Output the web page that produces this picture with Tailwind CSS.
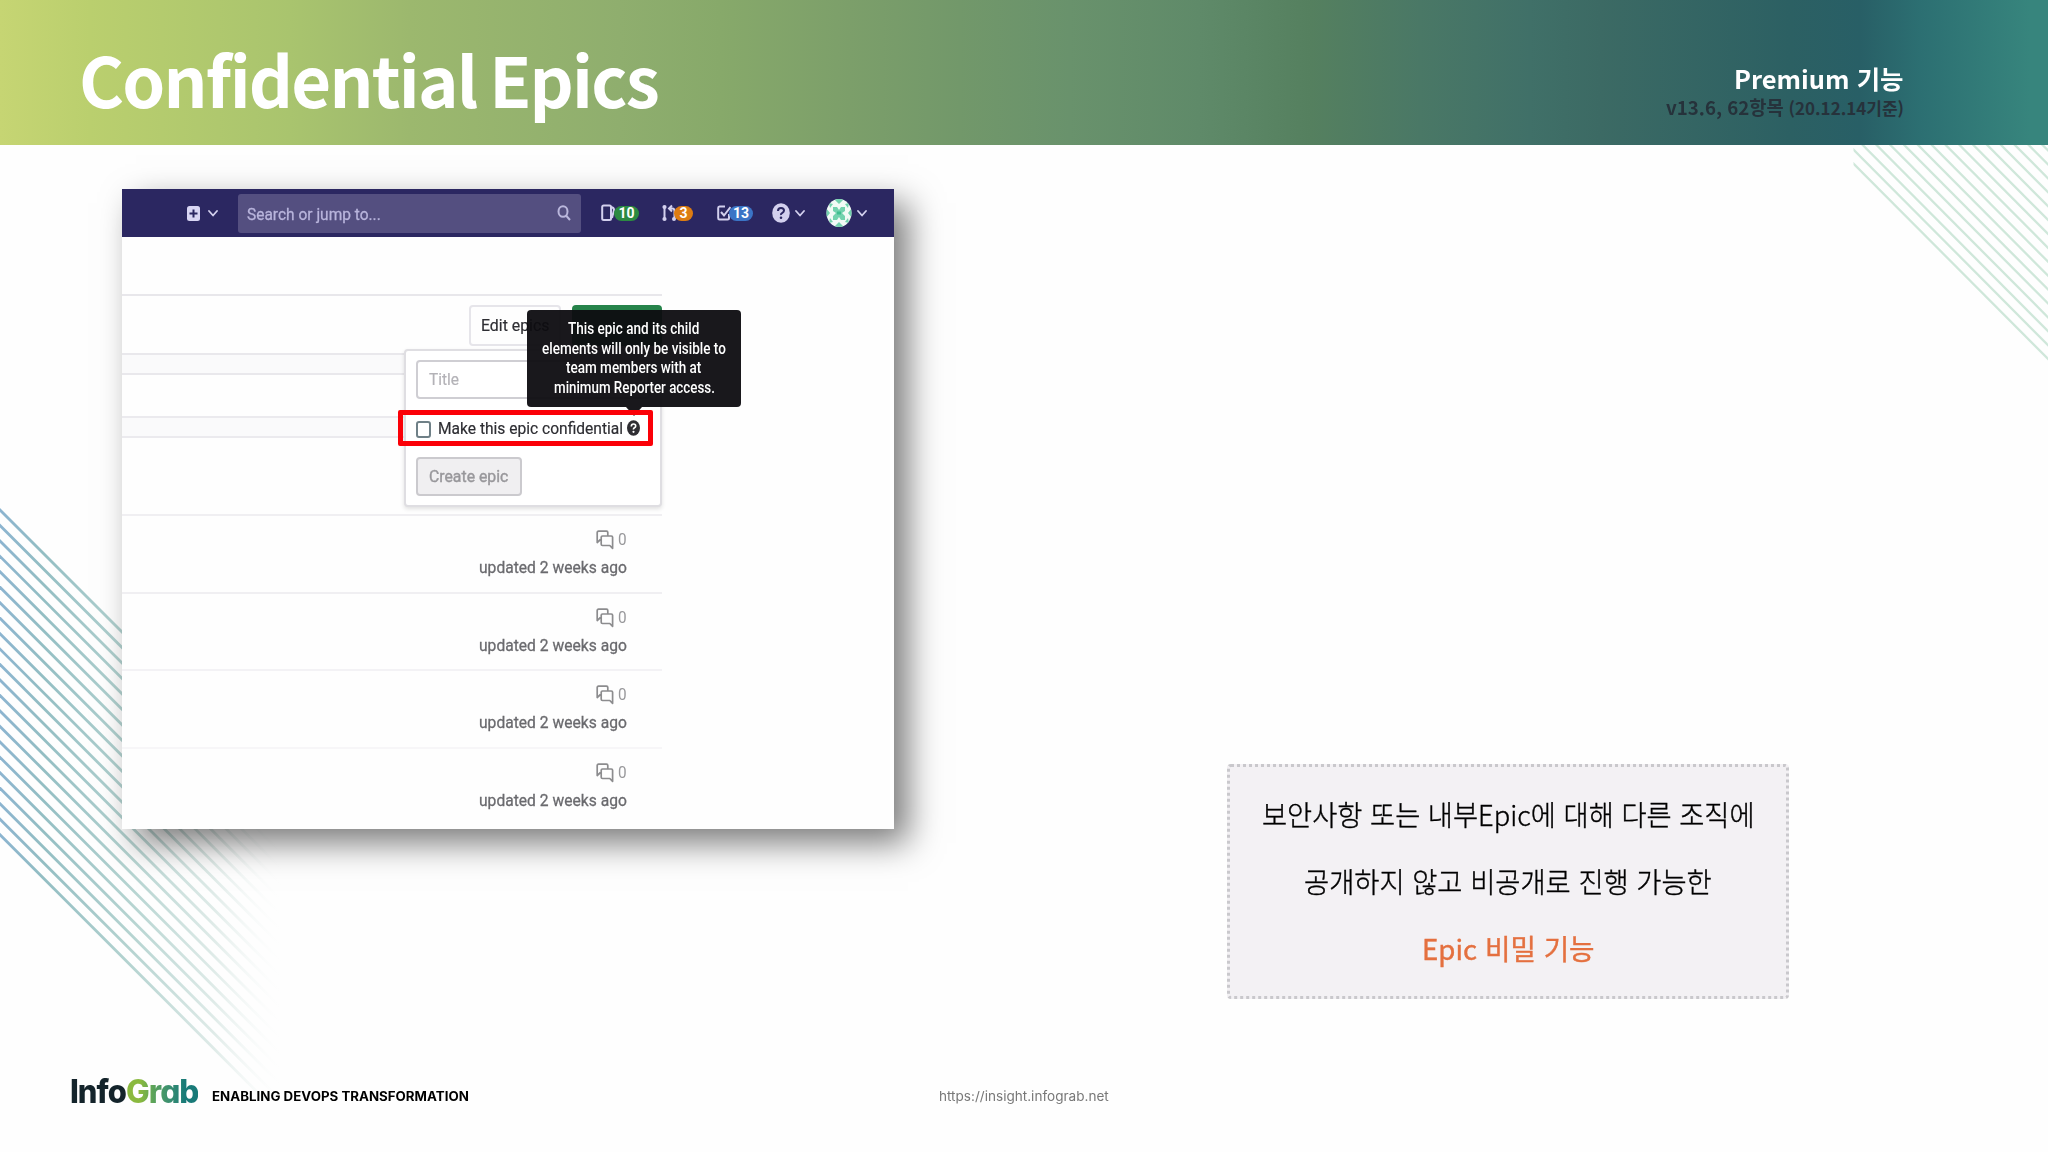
<!DOCTYPE html>
<html lang="ko">
<head>
<meta charset="utf-8">
<title>Confidential Epics</title>
<script src="https://cdn.jsdelivr.net/npm/@tailwindcss/browser@4"></script>
</head>
<body class="bg-[#fefefe]">
<svg class="hidden">
  <symbol id="chev" viewBox="0 0 10 7"><path d="M1 1l4 4.500 4-4.500" fill="none" stroke="#d3d0ee" stroke-width="1.800" stroke-linecap="round" stroke-linejoin="round"/></symbol>
  <symbol id="comments" viewBox="0 0 18 20"><path d="M4.500 9.500 1.200 12.500V2.500Q1.200 1.200 2.500 1.200H10.500Q11.800 1.200 11.800 2.500V5.500M6.500 6H15.300Q16.600 6 16.600 7.300V18.300L13.800 15.500H6.500Q5.200 15.500 5.200 14.200V7.300Q5.200 6 6.500 6Z" fill="none" stroke="#8c8c8e" stroke-width="1.700" stroke-linejoin="round"/></symbol>
</svg>
<div class="relative flex h-[1152px] w-[2048px] flex-col overflow-hidden font-['Roboto',sans-serif]">
  <!-- decorative stripes -->
  <svg class="absolute left-0 top-0" width="2048" height="1152" fill="none">
    <defs>
      <linearGradient id="lg" gradientUnits="userSpaceOnUse" x1="0" y1="0" x2="285" y2="0">
        <stop offset="0" stop-color="#8cb4d0"/><stop offset=".15" stop-color="#93bec3"/><stop offset=".45" stop-color="#b4d3d0"/><stop offset=".75" stop-color="#dfebe8"/><stop offset="1" stop-color="#fefefe" stop-opacity="0"/>
      </linearGradient>
      <clipPath id="rc"><rect x="1853.500" y="145" width="195" height="300"/></clipPath>
      <clipPath id="lc"><rect x="0" y="480" width="285" height="620"/></clipPath>
    </defs>
    <g id="left" clip-path="url(#lc)" stroke="url(#lg)" stroke-width="2.800"></g>
    <g id="right" clip-path="url(#rc)" stroke="#cfe7da" stroke-width="2.300"></g>
  </svg>

  <header class="relative flex h-[145px] shrink-0 items-start justify-between bg-[linear-gradient(90deg,#c6d573_0px,#bacf6e_90px,#a9c46e_290px,#9cb86e_410px,#8fae6e_620px,#87a96a_720px,#7c9f6a_850px,#72986a_960px,#69926c_1070px,#5f8a69_1200px,#55805f_1310px,#4a7866_1420px,#407068_1530px,#3c6a64_1600px,#2c6063_1790px,#285f66_1860px,#2c6f72_1920px,#37857d_2030px)] pl-[79px] pr-[144px]">
    <h1 class="pt-[28px] font-['Noto_Sans_CJK_KR',sans-serif] text-[69px] font-bold leading-[100px] tracking-[-1.8px] text-white [word-spacing:-5px]"><span data-w="579">Confidential Epics</span></h1>
    <div class="flex flex-col items-end pt-[60px] font-['Noto_Sans_CJK_KR',sans-serif] font-bold">
      <div class="text-[25px] leading-[36px] text-white"><span data-w="170">Premium 기능</span></div>
      <div class="flex items-baseline gap-[5px] leading-[22px] text-[#26323b]"><span class="text-[19px]" data-w="118">v13.6, 62항목</span><span class="text-[17px]" data-w="115">(20.12.14기준)</span></div>
    </div>
  </header>

  <main class="relative flex flex-1 items-start pl-[122px] pt-[44px]">
    <section class="relative h-[640px] w-[772px] bg-[#fefefe] shadow-[14px_14px_32px_0px_rgba(0,0,0,0.52)]">
      <nav class="flex h-[48px] items-center bg-[#2b2761]">
        <svg class="ml-[65px]" width="13" height="15"><rect width="13" height="15" rx="2.500" fill="#d9d6f4"/><path d="M6.500 3.500v8M2.500 7.500h8" stroke="#2b2761" stroke-width="2"/></svg>
        <svg class="ml-[8px]" width="10" height="7"><use href="#chev"/></svg>
        <div class="ml-[20px] flex h-[39px] w-[343px] items-center justify-between rounded-[3px] bg-[#544f80] pl-[9px] pr-[10px] text-[17px] text-[#b9b5dc] [-webkit-text-stroke:0.3px]">
          <span class="pt-[3px]" data-w="134">Search or jump to...</span>
          <svg width="14" height="16" fill="none" stroke="#bab7dc" stroke-width="2"><ellipse cx="6" cy="6.500" rx="4.500" ry="5.300"/><path d="M9 10.500l4 4.500"/></svg>
        </div>
        <div class="ml-[20px] flex items-center text-[14px] font-bold leading-[15px] text-white">
          <svg width="14" height="18" fill="none" stroke="#d3d0ee" stroke-width="2"><rect x="1.200" y="1.500" width="8.800" height="14.500" rx="1.500"/><path d="M10 3q3 .5 3 3l-2 8"/></svg>
          <span class="-ml-px flex h-[15px] w-[25px] items-center justify-center rounded-full bg-[#2c8a42]">10</span>
          <svg class="ml-[23px]" width="14" height="18" fill="none" stroke="#d3d0ee" stroke-width="2"><path d="M2.500 3v12M7.500 4.500h3q2 0 2 2.500v8M10 1.500l-3 3 3 3"/><g fill="#d3d0ee" stroke="none"><circle cx="2.500" cy="3" r="2.100"/><circle cx="2.500" cy="15" r="2.100"/><circle cx="12" cy="15" r="2"/></g></svg>
          <span class="-ml-[2px] flex h-[15px] w-[19px] items-center justify-center rounded-full bg-[#dd7c12]">3</span>
          <svg class="ml-[24px]" width="14" height="18" fill="none" stroke="#d3d0ee" stroke-width="2"><path d="M8 2.500H2.500Q1.200 2.500 1.200 4v10Q1.200 15.500 2.500 15.500h8Q12 15.500 12 14v-4M4 8l3 3.500L13.500 3"/></svg>
          <span class="-ml-[2px] flex h-[15px] w-[24px] items-center justify-center rounded-full bg-[#3b74c6]">13</span>
        </div>
        <svg class="ml-[19px]" width="18" height="20"><ellipse cx="9" cy="10" rx="8.800" ry="9.800" fill="#d3d0ee"/><path d="M6 8q0-3 3-3t3 2.500q0 1.500-1.600 2.300T9 12" fill="none" stroke="#2b2761" stroke-width="2"/><circle cx="9" cy="14.700" r="1.300" fill="#2b2761"/></svg>
        <svg class="ml-[5px]" width="10" height="7"><use href="#chev"/></svg>
        <svg class="ml-[21px]" width="26" height="28" viewBox="0 0 26 28"><defs><clipPath id="av"><ellipse cx="13" cy="14" rx="12.500" ry="14"/></clipPath></defs><g clip-path="url(#av)"><rect width="26" height="28" fill="#f2faf6"/><g fill="#73d2ae"><path d="M7 8h4l2 3 2-3h4v4l-3 2 3 3v4h-4l-2-3-2 3H7v-4l3-3-3-2z"/><path d="M8 0l5 5 5-5zM8 28l5-5 5 5zM0 9l4 5-4 5zM26 9l-4 5 4 5zM3 4l4 1-3 4zM23 4l-4 1 3 4zM3 24l4-1-3-4zM23 24l-4-1 3-4z"/></g><path d="M11 12.500h4v3h-4z" fill="#3fbd8f"/></g></svg>
        <svg class="ml-[5px]" width="10" height="7"><use href="#chev"/></svg>
      </nav>
      <div class="flex w-[540px] flex-col">
        <div class="h-[59px] border-b-2 border-[#e8e7eb]"></div>
        <div class="flex h-[57px] items-start justify-end gap-[11px] pt-[9px]">
          <div class="flex h-[41px] w-[92px] items-center rounded-[4px] border-2 border-[#e6e5ea] pl-[10px] text-[17px] text-[#2e2e33] [-webkit-text-stroke:0.2px]"><span data-w="68">Edit epics</span></div>
          <div class="h-[41px] w-[90px] rounded-[4px] bg-[#26834a]"></div>
        </div>
        <div class="h-[22px] w-[284px] border-y-2 border-[#e9e8ec] bg-[#fafafb]"></div>
        <div class="mt-[41px] h-[22px] w-[284px] border-y-2 border-[#ebeaee] bg-[#fafafb]"></div>
        <div class="h-[76px]"></div>
        <div class="flex h-[77.500px] flex-col items-end border-t-2 border-[#f0eff2] pr-[35px] pt-[13px]">
          <div class="flex h-[22px] items-center gap-[4px] text-[17px] text-[#98989b]"><svg width="18" height="20"><use href="#comments"/></svg><span data-w="9">0</span></div>
          <div class="mt-[6px] text-[17px] leading-[20px] text-[#6a6a6e] [-webkit-text-stroke:0.3px]"><span data-w="148">updated 2 weeks ago</span></div>
        </div>
        <div class="flex h-[77.500px] flex-col items-end border-t-2 border-[#f0eff2] pr-[35px] pt-[13px]">
          <div class="flex h-[22px] items-center gap-[4px] text-[17px] text-[#98989b]"><svg width="18" height="20"><use href="#comments"/></svg><span data-w="9">0</span></div>
          <div class="mt-[6px] text-[17px] leading-[20px] text-[#6a6a6e] [-webkit-text-stroke:0.3px]"><span data-w="148">updated 2 weeks ago</span></div>
        </div>
        <div class="flex h-[77.500px] flex-col items-end border-t-2 border-[#f3f2f5] pr-[35px] pt-[13px]">
          <div class="flex h-[22px] items-center gap-[4px] text-[17px] text-[#98989b]"><svg width="18" height="20"><use href="#comments"/></svg><span data-w="9">0</span></div>
          <div class="mt-[6px] text-[17px] leading-[20px] text-[#6a6a6e] [-webkit-text-stroke:0.3px]"><span data-w="148">updated 2 weeks ago</span></div>
        </div>
        <div class="flex h-[77.500px] flex-col items-end border-t-2 border-[#f7f6f8] pr-[35px] pt-[13px]">
          <div class="flex h-[22px] items-center gap-[4px] text-[17px] text-[#98989b]"><svg width="18" height="20"><use href="#comments"/></svg><span data-w="9">0</span></div>
          <div class="mt-[6px] text-[17px] leading-[20px] text-[#6a6a6e] [-webkit-text-stroke:0.3px]"><span data-w="148">updated 2 weeks ago</span></div>
        </div>
      </div>

      <!-- new epic dropdown -->
      <div class="absolute left-[282px] top-[160px] flex h-[158px] w-[258px] flex-col items-start rounded-[4px] border-2 border-[#dfdee2] bg-white pl-[10px] pt-[9px] text-[17px] shadow-[0_2px_4px_rgba(0,0,0,0.12)] [-webkit-text-stroke:0.2px]">
        <div class="flex h-[39px] w-[234px] items-center rounded-[4px] border-2 border-[#cfced3] pl-[11px] text-[#b3b2b7]"><span data-w="30">Title</span></div>
        <div class="mt-[20px] flex h-[20px] items-center text-[#2e2e33]">
          <span class="h-[17px] w-[15px] rounded-[3px] border-2 border-[#6f8087] bg-white"></span>
          <span class="ml-[7px] flex"><span data-w="185">Make this epic confidential</span></span>
          <svg class="-mt-[2px] ml-[4px]" width="13" height="16"><ellipse cx="6.500" cy="8" rx="6.500" ry="7.700" fill="#2f2e33"/><path d="M4.300 6.500q0-2.500 2.200-2.500t2.200 2q0 1.200-1.200 1.800T6.500 9.500" fill="none" stroke="#fff" stroke-width="1.600"/><circle cx="6.500" cy="11.800" r="1.100" fill="#fff"/></svg>
        </div>
        <div class="mt-[18px] flex h-[39px] w-[106px] items-center justify-center rounded-[4px] border-2 border-[#cbcace] bg-[#f0eff1] text-[#98979b] [-webkit-text-stroke:0.4px]"><span data-w="79">Create epic</span></div>
      </div>
      <!-- tooltip -->
      <div class="absolute left-[405px] top-[121px] flex h-[97px] w-[214px] flex-col items-center rounded-[4px] bg-[#0d0c10]/95 pt-[9px] text-[16px] font-medium leading-[19.500px] text-white">
        <span data-w="131">This epic and its child</span><span data-w="184">elements will only be visible to</span><span data-w="135">team members with at</span><span data-w="161">minimum Reporter access.</span>
        <svg class="absolute left-[99px] top-[97px]" width="16" height="9"><path d="M0 0h16L8 9z" fill="#19181c"/></svg>
      </div>
      <div class="absolute left-[276px] top-[221px] h-[36px] w-[255px] rounded-[2px] border-[5px] border-[#fb0007]"></div>
    </section>

    <aside class="ml-[333px] mt-[575px] flex h-[235px] w-[562px] flex-col items-center rounded-[4px] border-[3px] border-dotted border-[#c9c8cc] bg-[#f3f1f4] pt-[14px] font-['Noto_Sans_CJK_KR',sans-serif] text-[28px] font-light leading-[67px] text-black [-webkit-text-stroke:0.4px]">
      <span data-w="493">보안사항 또는 내부Epic에 대해 다른 조직에</span>
      <span data-w="408">공개하지 않고 비공개로 진행 가능한</span>
      <span class="font-normal text-[#e4703f]" data-w="173">Epic 비밀 기능</span>
    </aside>
  </main>

  <footer class="relative flex h-[92px] shrink-0 items-start pl-[70px]">
    <div class="flex pt-[12px] font-['Inter',sans-serif] text-[32px] font-extrabold leading-[40px] tracking-[-1px] [font-feature-settings:'cv11'_1]"><span class="text-[#14242b]" data-w="56">Info</span><span class="bg-[linear-gradient(90deg,#8ab93f_20%,#5ba35a_38%,#3b8f70_60%,#187a78_82%)] bg-clip-text text-transparent" data-w="72">Grab</span></div>
    <div class="ml-[14px] pt-[26px] font-['Inter',sans-serif] text-[13px] font-bold leading-[20px] text-black"><span data-w="257">ENABLING DEVOPS TRANSFORMATION</span></div>
    <div class="ml-[470px] pt-[26px] font-['Inter',sans-serif] text-[13px] leading-[20px] text-[#777]"><span data-w="170">https://insight.infograb.net</span></div>
  </footer>
</div>
<script>
// Stretch each label to its set width while keeping its place in the flow.
function fit(e) {
  const n = e.offsetWidth, w = +e.dataset.w;
  e.style.transform = `scaleX(${w / n})`;
  e.style.marginRight = (w - n) + 'px';
}
const ro = new ResizeObserver(list => list.forEach(x => fit(x.target)));
const labels = document.querySelectorAll('[data-w]');
labels.forEach(e => {
  e.style.display = 'inline-block';
  e.style.whiteSpace = 'nowrap';
  e.style.transformOrigin = '0 50%';
  e.style.flexShrink = '0';
  ro.observe(e);
});
window.addEventListener('load', () => labels.forEach(fit));
let l = '', r = '';
for (let i = 0; i < 22; i++) { const y = 510 + i * 15.46; l += `<path d="M-2 ${y - 2}L290 ${y + 290}"/>`; }
for (let i = 0; i < 16; i++) { const y = 163.5 - i * 13.9; r += `<path d="M1850 ${y - 3.5}L2050 ${y + 197.5}"/>`; }
document.getElementById('left').innerHTML = l;
document.getElementById('right').innerHTML = r;
</script>
</body>
</html>
